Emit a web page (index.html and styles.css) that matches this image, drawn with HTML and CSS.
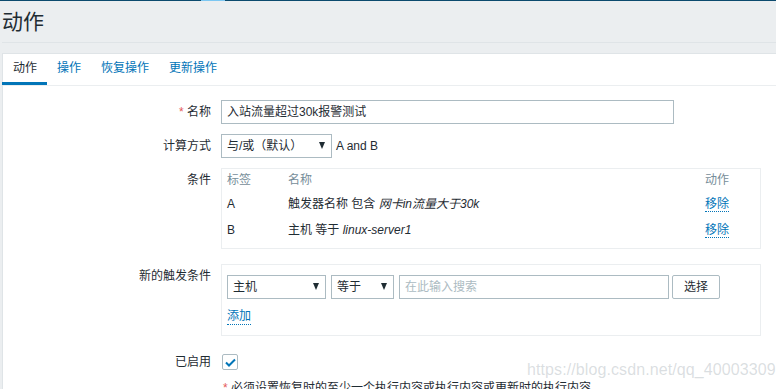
FILE: index.html
```html
<!DOCTYPE html>
<html lang="zh-CN">
<head>
  <meta charset="UTF-8">
  <meta name="viewport" content="width=device-width, initial-scale=1.0">
  <title>动作</title>
  <link rel="stylesheet" href="styles.css">
</head>
<body>
  <div class="topbar"><span class="topbar-mark"></span></div>

  <div class="wrapper">
    <h1 class="page-title">动作</h1>

    <div class="panel">
      <ul class="tabs">
        <li class="tab active">动作</li>
        <li class="tab">操作</li>
        <li class="tab">恢复操作</li>
        <li class="tab">更新操作</li>
      </ul>

      <div class="form">
        <div class="label"><span class="req">*</span> 名称</div>
        <div class="field">
          <div class="input wide">入站流量超过30k报警测试</div>
        </div>

        <div class="label">计算方式</div>
        <div class="field inline">
          <div class="select calc">与/或（默认）<span class="caret"></span></div>
          <span class="formula">A and B</span>
        </div>

        <div class="label">条件</div>
        <div class="field">
          <div class="box cond">
            <div class="cond-row head">
              <span>标签</span><span>名称</span><span>动作</span>
            </div>
            <div class="cond-row">
              <span>A</span>
              <span>触发器名称 包含 <em>网卡in流量大于30k</em></span>
              <span><a class="link">移除</a></span>
            </div>
            <div class="cond-row">
              <span>B</span>
              <span>主机 等于 <em>linux-server1</em></span>
              <span><a class="link">移除</a></span>
            </div>
          </div>
        </div>

        <div class="label spaced">新的触发条件</div>
        <div class="field spaced">
          <div class="box newcond">
            <div class="controls">
              <div class="select host">主机<span class="caret"></span></div>
              <div class="select op">等于<span class="caret"></span></div>
              <div class="input search placeholder">在此输入搜索</div>
              <button class="btn">选择</button>
            </div>
            <a class="link add">添加</a>
          </div>
        </div>

        <div class="label enabled">已启用</div>
        <div class="field enabled">
          <span class="checkbox">
            <svg width="11" height="9" viewBox="0 0 11 9"><path d="M1 4.5 L4 7.5 L10 1.5" fill="none" stroke="#0275b8" stroke-width="2"/></svg>
          </span>
        </div>

        <div class="label note"></div>
        <div class="field note"><span class="req">*</span> 必须设置恢复时的至少一个执行内容或执行内容或更新时的执行内容。</div>
      </div>
    </div>
  </div>

  <div class="watermark">https://blog.csdn.net/qq_40003309</div>
</body>
</html>
```

FILE: styles.css
```css
body {
  margin: 0;
  background-color: #ebeef0;
  color: #1f2c33;
  font-family: "Liberation Sans", "Noto Sans CJK SC", sans-serif;
  font-size: 12px;
  overflow: hidden;
}
.topbar {
  height: 1px;
  background-color: #0b4a6e;
  display: flex;
}
.topbar-mark {
  margin-left: 201px;
  width: 24px;
  background-color: #7cc7f2;
}
.wrapper {
  margin-left: 2px;
}
.page-title {
  margin: 0;
  height: 41px;
  line-height: 42px;
  font-size: 21px;
  font-weight: normal;
  border-bottom: 1px solid #dfe4e7;
}
.panel {
  margin-top: 10px;
  background-color: #fff;
  border: 1px solid #dfe4e7;
  border-right: none;
  height: 400px;
}
.tabs {
  list-style: none;
  margin: 0;
  padding: 0;
  display: flex;
  border-bottom: 1px solid #ebeef0;
}
.tab {
  padding: 0 10px;
  line-height: 28px;
  border-bottom: 3px solid transparent;
  color: #0275b8;
}
.tab.active {
  color: #1f2c33;
  border-bottom-color: #0275b8;
  margin-left: -1px;
  padding-left: 11px;
}
.form {
  display: grid;
  grid-template-columns: 208px 1fr;
  column-gap: 10px;
  row-gap: 10px;
  padding-top: 14px;
}
.label {
  text-align: right;
  line-height: 24px;
}
.req {
  color: #e45959;
}
.field {
  min-height: 24px;
}
.field.inline {
  display: flex;
  align-items: center;
  gap: 4px;
}
.spaced {
  margin-top: 5px;
}
.input, .select, .btn {
  box-sizing: border-box;
  height: 24px;
  line-height: 22px;
  border: 1px solid #acbbc2;
  background-color: #fff;
  padding: 0 5px;
  font-family: inherit;
  font-size: 12px;
  color: #1f2c33;
}
.input.wide {
  width: 453px;
}
.placeholder {
  color: #acbbc2;
}
.select {
  display: flex;
  justify-content: space-between;
  align-items: center;
  padding-right: 6px;
}
.caret {
  width: 0;
  height: 0;
  border-left: 3.5px solid transparent;
  border-right: 3.5px solid transparent;
  border-top: 7px solid #1f2c33;
  margin-top: -2px;
}
.select.calc {
  width: 111px;
}
.select.host {
  width: 99px;
}
.select.op {
  width: 63px;
}
.input.search {
  width: 270px;
}
.btn {
  width: 48px;
  border-radius: 2px;
  padding: 0;
  text-align: center;
}
.box {
  box-sizing: border-box;
  width: 540px;
  border: 1px solid #ebeef0;
}
.cond {
  padding: 0 5px 5px;
}
.cond-row {
  display: grid;
  grid-template-columns: 61px 1fr 50px;
  line-height: 26px;
}
.cond-row.head {
  line-height: 22px;
  color: #768d99;
}
em {
  font-style: italic;
}
.link {
  color: #0275b8;
  border-bottom: 1px dotted #0275b8;
  line-height: 14px;
  display: inline-block;
}
.newcond {
  padding: 10px 5px 10px;
}
.controls {
  display: flex;
  gap: 5px;
}
.controls .btn {
  margin-left: -2px;
}
.add {
  margin-top: 10px;
  line-height: 15px;
}
.enabled {
  margin-top: 4px;
}
.checkbox {
  box-sizing: border-box;
  display: flex;
  align-items: center;
  justify-content: center;
  width: 16px;
  height: 16px;
  margin-top: 4px;
  margin-left: 1px;
  border: 1px solid #acbbc2;
  border-radius: 2px;
}
.note {
  margin-top: -4px;
  line-height: 16px;
}
.field.note {
  padding-left: 2px;
}
.watermark {
  position: absolute;
  left: 527px;
  top: 361px;
  font-size: 16px;
  color: rgba(150, 160, 168, 0.35);
  letter-spacing: 0.1px;
}
```
